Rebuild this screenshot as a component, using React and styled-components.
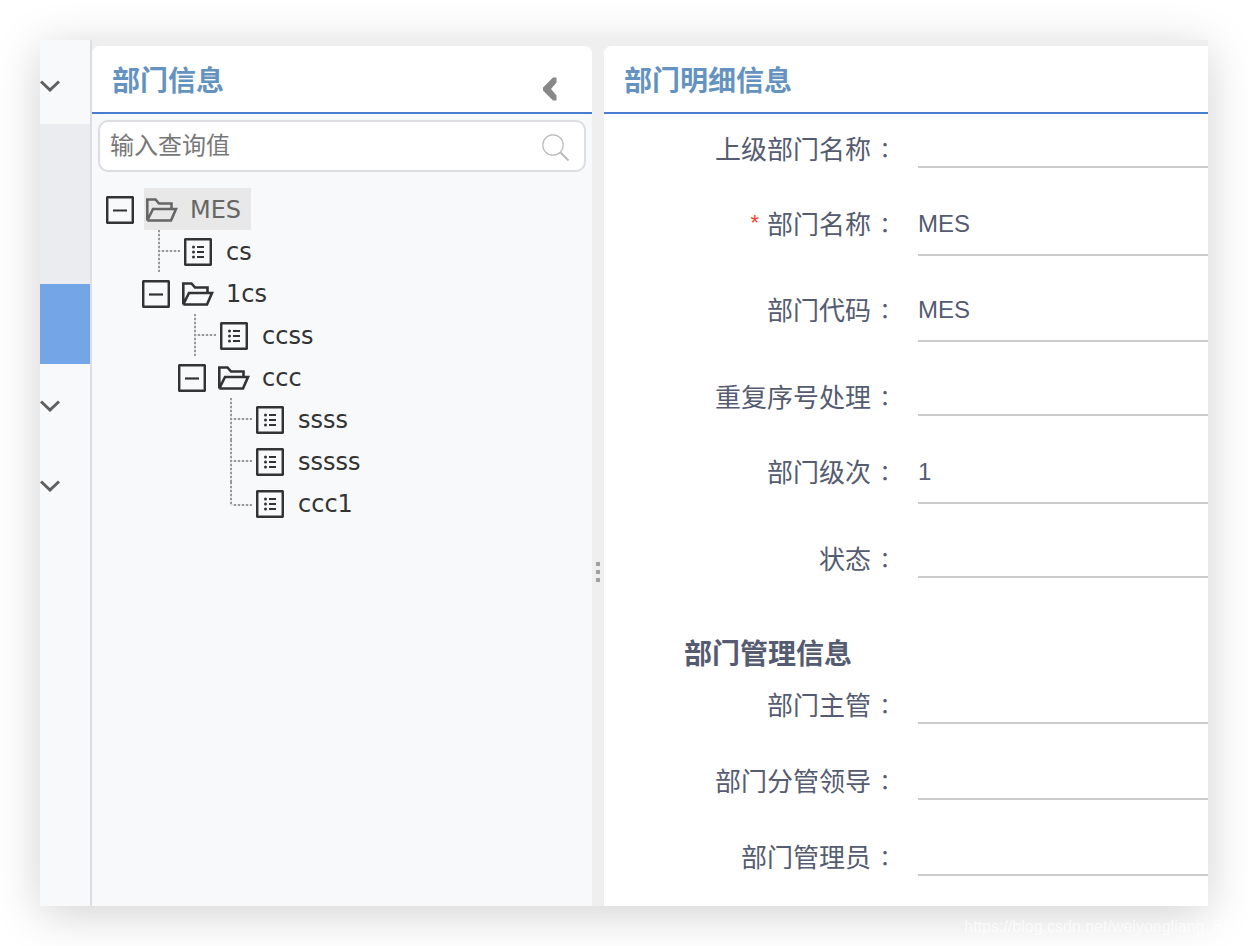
import React, { useState } from "react";
import styled, { createGlobalStyle } from "styled-components";

const GlobalStyle = createGlobalStyle`
  * {
    box-sizing: border-box;
  }
  body {
    margin: 0;
    background: #fff;
    font-family: "Liberation Sans", "Noto Sans CJK SC", sans-serif;
  }
  button,
  input {
    font: inherit;
    color: inherit;
  }
`;

const Page = styled.div`
  display: flex;
  flex-direction: column;
  min-height: 100vh;
  padding: 40px 40px 0;
  overflow: hidden;
`;

const Window = styled.main`
  flex: 1;
  display: flex;
  background: #efefef;
  box-shadow: 0 8px 44px rgba(0, 0, 0, 0.18);
`;

const SideNav = styled.nav`
  flex: none;
  width: 52px;
  display: flex;
  flex-direction: column;
  padding-top: 4px;
  background: #f7f9fb;
  border-right: 2px solid #dddee1;
`;

const NavItem = styled.button`
  height: 80px;
  padding: 4px 0 0;
  border: 0;
  display: flex;
  align-items: center;
  background: ${(props) => props.$bg || "transparent"};
  color: #606060;
  cursor: pointer;
`;

const Panel = styled.section`
  display: flex;
  flex-direction: column;
  margin-top: 6px;
  min-width: 0;
  overflow: hidden;
  background: #fff;
`;

const TreePanel = styled(Panel)`
  flex: none;
  width: 500px;
  border-radius: 8px 8px 0 0;
  background: #f7f9fb;
`;

const DetailPanel = styled(Panel)`
  flex: 1;
  border-radius: 8px 0 0 0;
`;

const PanelHeader = styled.header`
  display: flex;
  align-items: center;
  justify-content: space-between;
  height: 68px;
  padding: 6px 32px 0 20px;
  background: #fff;
  border-bottom: 2px solid #4a7ed1;
`;

const Title = styled.h2`
  margin: 0;
  font-size: 28px;
  font-weight: 700;
  line-height: 40px;
  color: #6593c0;
`;

const IconButton = styled.button`
  display: flex;
  padding: ${(props) => props.$pad || "0"};
  border: 0;
  background: none;
  color: #888;
  cursor: pointer;
`;

const SearchBox = styled.div`
  display: flex;
  align-items: center;
  height: 52px;
  margin: 6px 6px 0;
  padding: 0 14px 0 10px;
  background: #fff;
  border: 2px solid #dcdde1;
  border-radius: 10px;
`;

const SearchInput = styled.input`
  flex: 1;
  min-width: 0;
  height: 40px;
  padding: 0;
  border: 0;
  outline: 0;
  background: none;
  font-size: 24px;
  &::placeholder {
    color: #777;
  }
`;

const Tree = styled.ul`
  list-style: none;
  margin: 0;
  padding: 16px 0 0 14px;
  font-family: "DejaVu Sans", "Noto Sans CJK SC", sans-serif;
  font-size: 24px;
  color: #333;
  ul {
    list-style: none;
    margin: 0;
    padding: 0 0 0 36px;
  }
`;

const TreeRow = styled.div`
  display: flex;
  align-items: center;
  height: 42px;
  gap: ${(props) => (props.$leaf ? "4px" : "10px")};
  padding-left: ${(props) => (props.$leaf ? "16px" : "0")};
`;

const Toggle = styled.button`
  display: flex;
  margin-top: 2px;
  padding: 0;
  border: 0;
  background: none;
  cursor: pointer;
`;

const NodeLabel = styled.button`
  display: flex;
  align-items: center;
  height: 42px;
  gap: ${(props) => (props.$leaf ? "14px" : "12px")};
  padding: ${(props) => (props.$leaf ? "2px 0 0" : "2px 10px 0 2px")};
  border: 0;
  background: ${(props) => (props.$selected ? "#e8e8e8" : "none")};
  color: ${(props) => (props.$selected ? "#666" : "#333")};
  cursor: pointer;
`;

// dotted guide: a vertical run and a stub pointing at the leaf icon
const Guide = styled.span`
  width: 22px;
  height: 42px;
  background-image: repeating-linear-gradient(#999 0 2px, #e4e5e7 2px 4px),
    repeating-linear-gradient(90deg, #999 0 2px, #e4e5e7 2px 4px);
  background-repeat: no-repeat;
  background-size: 2px ${(props) => (props.$last ? "24px" : "42px")}, 22px 2px;
  background-position: 0 0, 0 ${(props) => (props.$last ? "22px" : "20px")};
`;

const Splitter = styled.div`
  flex: none;
  width: 12px;
  display: flex;
  flex-direction: column;
  align-items: center;
  gap: 4px;
  padding-top: 522px;
`;

const Grip = styled.span`
  width: 4px;
  height: 4px;
  background: #a0a0a0;
`;

const FieldList = styled.div`
  display: flex;
  flex-direction: column;
  padding-top: 16px;
`;

const Field = styled.div`
  display: grid;
  grid-template-columns: 293px 1fr;
  grid-template-rows: 100%;
  column-gap: 21px;
  align-items: center;
  height: ${(props) => (props.$filled ? "64px" : "38px")};
  margin-top: ${(props) => (props.$filled ? "22px" : "36px")};
  margin-bottom: ${(props) => (props.$filled ? "0" : "2px")};
  color: #555b70;
  &:first-child {
    margin-top: 0;
  }
`;

const FieldLabel = styled.label`
  display: flex;
  justify-content: flex-end;
  padding-top: 2px;
  font-size: 26px;
  line-height: 36px;
`;

const Colon = styled.span`
  width: 28px;
  margin-right: -2px;
  text-align: center;
  font-family: "Noto Sans CJK TC", sans-serif;
  font-size: 22px;
  line-height: 32px;
`;

const Required = styled.span`
  margin-right: 8px;
  font-size: 22px;
  line-height: 32px;
  color: #f5402c;
`;

const FieldInput = styled.input`
  width: 100%;
  height: 100%;
  padding: 2px 0 0;
  border: 0;
  border-bottom: 2px solid #ccc;
  border-radius: 0;
  outline: 0;
  background: none;
  font-size: 24px;
`;

const SectionTitle = styled.h3`
  margin: 60px 0 0 80px;
  font-size: 28px;
  font-weight: 700;
  line-height: 30px;
  color: #555b70;
`;

const Footer = styled.footer`
  position: relative;
  height: 40px;
  margin-right: -32px;
  font-size: 16px;
  line-height: 42px;
  text-align: right;
  color: rgba(255, 255, 255, 0.7);
`;

function ChevronDown() {
  return (
    <svg width="20" height="12" viewBox="0 0 20 12" fill="none" stroke="currentColor" strokeWidth="3">
      <path d="M1 1.5l9 8.5 9-8.5" />
    </svg>
  );
}

function CollapseIcon() {
  return (
    <svg width="20" height="24" viewBox="0 0 20 24" fill="currentColor">
      <path d="M13 .5h3.500v5L11 12l5.500 6.500v5H13L3 13.500v-3z" />
    </svg>
  );
}

function SearchIcon() {
  return (
    <svg width="28" height="28" viewBox="0 0 28 28" fill="none" stroke="#bbb">
      <circle cx="11" cy="11" r="10.200" strokeWidth="1.200" />
      <path d="M18.500 18.500l8 8" strokeWidth="2.200" />
    </svg>
  );
}

function ToggleIcon({ open }) {
  return (
    <svg width="28" height="28" viewBox="0 0 28 28" fill="none" stroke="#333" strokeWidth="2.200">
      <rect x="1.2" y="1.2" width="25.600" height="25.600" rx=".5" strokeWidth="2.500" />
      <path d={open ? "M7 14.500h14" : "M7 14.500h14M14 7.500v14"} />
    </svg>
  );
}

function FolderIcon() {
  return (
    <svg width="32" height="24" viewBox="0 0 32 24" fill="none" stroke="currentColor" strokeWidth="2.600">
      <path d="M25.500 10.500V5.500H13L9.500 1.500H1.300V22.500L7 11H30L25 22.500H1.300" />
    </svg>
  );
}

function LeafIcon() {
  return (
    <svg width="28" height="28" viewBox="0 0 28 28" fill="none" stroke="#333" strokeWidth="2.200">
      <rect x="1.2" y="1.2" width="25.600" height="25.600" rx=".5" strokeWidth="2.500" />
      <path d="M13 9h7M13 14h7M13 19h7" />
      <g fill="#333" stroke="none">
        <circle cx="9.500" cy="9" r="1.500" />
        <circle cx="9.500" cy="14" r="1.500" />
        <circle cx="9.500" cy="19" r="1.500" />
      </g>
    </svg>
  );
}

const navItems = [
  { name: "menu-1", arrow: true },
  { name: "menu-2", bg: "#ebecf0" },
  { name: "menu-3", bg: "#ebecf0" },
  { name: "menu-4", bg: "#73a5e7" },
  { name: "menu-5", arrow: true },
  { name: "menu-6", arrow: true },
];

const departments = [
  {
    name: "MES",
    children: [
      { name: "cs" },
      {
        name: "1cs",
        children: [
          { name: "ccss" },
          {
            name: "ccc",
            children: [{ name: "ssss" }, { name: "sssss" }, { name: "ccc1" }],
          },
        ],
      },
    ],
  },
];

const baseFields = [
  { id: "parent", label: "上级部门名称", value: "" },
  { id: "name", label: "部门名称", value: "MES", required: true },
  { id: "code", label: "部门代码", value: "MES" },
  { id: "repeat", label: "重复序号处理", value: "" },
  { id: "level", label: "部门级次", value: "1" },
  { id: "status", label: "状态", value: "" },
];

const manageFields = [
  { id: "manager", label: "部门主管", value: "" },
  { id: "leader", label: "部门分管领导", value: "" },
  { id: "admin", label: "部门管理员", value: "" },
];

function TreeNode({ node, last, selected, onSelect }) {
  const [open, setOpen] = useState(true);
  const leaf = !node.children;

  return (
    <li>
      <TreeRow $leaf={leaf}>
        {leaf ? (
          <Guide $last={last} />
        ) : (
          <Toggle aria-label="toggle" aria-expanded={open} onClick={() => setOpen(!open)}>
            <ToggleIcon open={open} />
          </Toggle>
        )}
        <NodeLabel
          $leaf={leaf}
          $selected={selected === node.name}
          onClick={() => onSelect(node.name)}
        >
          {leaf ? <LeafIcon /> : <FolderIcon />}
          {node.name}
        </NodeLabel>
      </TreeRow>
      {!leaf && open && (
        <ul>
          {node.children.map((child, i) => (
            <TreeNode
              key={child.name}
              node={child}
              last={i === node.children.length - 1}
              selected={selected}
              onSelect={onSelect}
            />
          ))}
        </ul>
      )}
    </li>
  );
}

function Fields({ items }) {
  return (
    <FieldList>
      {items.map((item) => (
        <Field key={item.id} $filled={item.value !== ""}>
          <FieldLabel htmlFor={item.id}>
            {item.required && <Required>*</Required>}
            {item.label}
            <Colon>：</Colon>
          </FieldLabel>
          <FieldInput id={item.id} defaultValue={item.value} />
        </Field>
      ))}
    </FieldList>
  );
}

function App() {
  const [selected, setSelected] = useState("MES");

  return (
    <Page>
      <GlobalStyle />
      <Window>
        <SideNav>
          {navItems.map((item) => (
            <NavItem key={item.name} $bg={item.bg} aria-label={item.name}>
              {item.arrow && <ChevronDown />}
            </NavItem>
          ))}
        </SideNav>
        <TreePanel>
          <PanelHeader>
            <Title>部门信息</Title>
            <IconButton $pad="14px 0 0" aria-label="collapse">
              <CollapseIcon />
            </IconButton>
          </PanelHeader>
          <SearchBox>
            <SearchInput type="text" aria-label="search" placeholder="输入查询值" />
            <IconButton $pad="4px 0 0" aria-label="submit search">
              <SearchIcon />
            </IconButton>
          </SearchBox>
          <Tree>
            {departments.map((node) => (
              <TreeNode key={node.name} node={node} selected={selected} onSelect={setSelected} />
            ))}
          </Tree>
        </TreePanel>
        <Splitter>
          <Grip />
          <Grip />
          <Grip />
        </Splitter>
        <DetailPanel>
          <PanelHeader>
            <Title>部门明细信息</Title>
          </PanelHeader>
          <Fields items={baseFields} />
          <SectionTitle>部门管理信息</SectionTitle>
          <Fields items={manageFields} />
        </DetailPanel>
      </Window>
      <Footer>https://blog.csdn.net/weiyongliang_817</Footer>
    </Page>
  );
}

export default App;
